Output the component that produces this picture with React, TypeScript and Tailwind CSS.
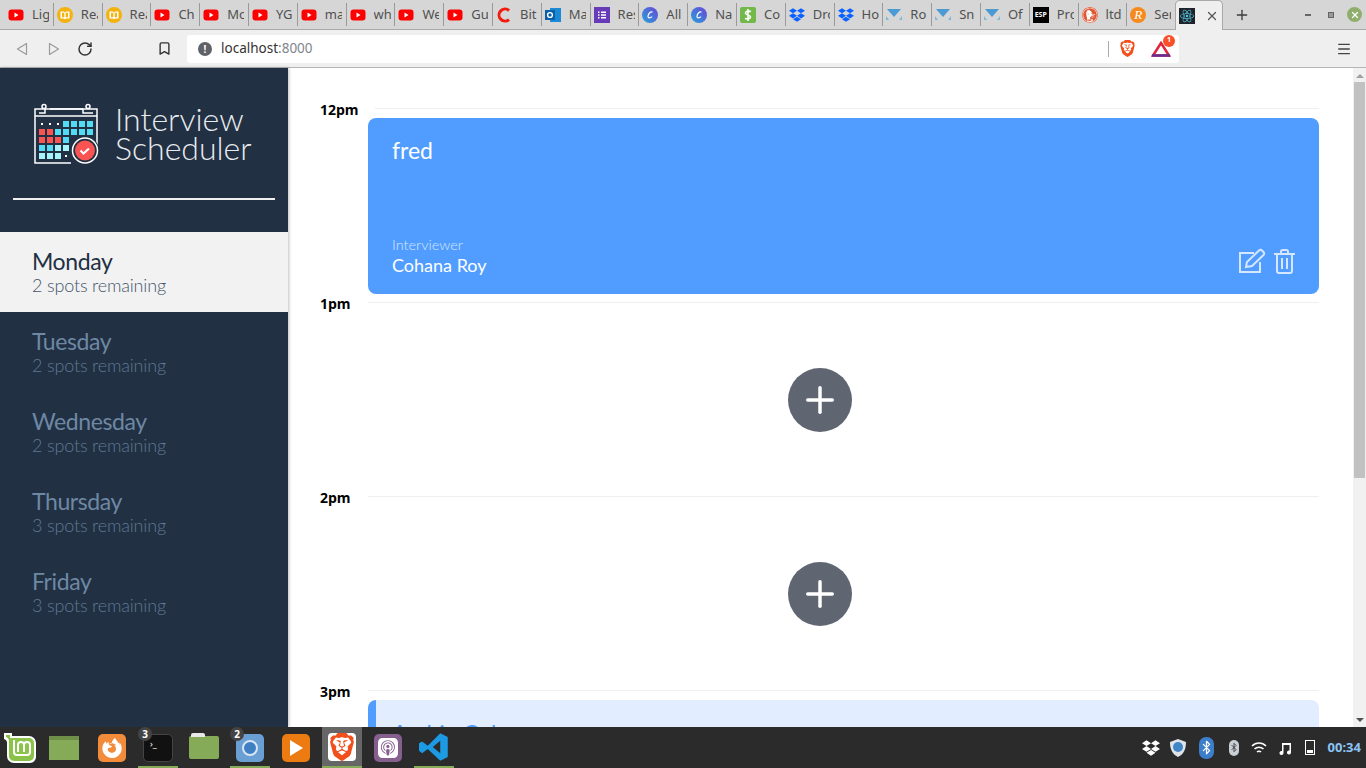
import { Bluetooth, Bookmark, Menu, Plus, RotateCw, X } from 'lucide-react';
import { SiApplepodcasts, SiBrave, SiDropbox, SiDuckduckgo, SiFirefoxbrowser, SiReact } from 'react-icons/si';
import type { ReactNode } from 'react';

type IconName =
  | 'yt' | 'book' | 'bit' | 'outlook' | 'forms' | 'canva' | 'coin' | 'dropbox'
  | 'tri' | 'esp' | 'duck' | 'r';

const tabs: { icon: IconName; label: string }[] = [
  { icon: 'yt', label: 'Lig' },
  { icon: 'book', label: 'Rea' },
  { icon: 'book', label: 'Rea' },
  { icon: 'yt', label: 'Cha' },
  { icon: 'yt', label: 'Mo' },
  { icon: 'yt', label: 'YG' },
  { icon: 'yt', label: 'ma' },
  { icon: 'yt', label: 'wh' },
  { icon: 'yt', label: 'We' },
  { icon: 'yt', label: 'Gu' },
  { icon: 'bit', label: 'Bit' },
  { icon: 'outlook', label: 'Ma' },
  { icon: 'forms', label: 'Res' },
  { icon: 'canva', label: 'All' },
  { icon: 'canva', label: 'Na' },
  { icon: 'coin', label: 'Co' },
  { icon: 'dropbox', label: 'Dro' },
  { icon: 'dropbox', label: 'Ho' },
  { icon: 'tri', label: 'Ro' },
  { icon: 'tri', label: 'Sn' },
  { icon: 'tri', label: 'Of' },
  { icon: 'esp', label: 'Pro' },
  { icon: 'duck', label: 'ltd' },
  { icon: 'r', label: 'Ser' },
];

const days = [
  { name: 'Monday', spots: '2 spots remaining', selected: true },
  { name: 'Tuesday', spots: '2 spots remaining' },
  { name: 'Wednesday', spots: '2 spots remaining' },
  { name: 'Thursday', spots: '3 spots remaining' },
  { name: 'Friday', spots: '3 spots remaining' },
];

function Favicon({ name }: { name: IconName }) {
  switch (name) {
    case 'yt':
      return (
        <svg width="16" height="16" viewBox="0 0 16 16">
          <rect x="0.5" y="2.5" width="15" height="11" rx="3" fill="#f00" />
          <path d="M6.5 5.5v5l4-2.5z" fill="#fff" />
        </svg>
      );
    case 'book':
      return (
        <svg width="16" height="16" viewBox="0 0 16 16">
          <circle cx="8" cy="8" r="8" fill="#f4b20f" />
          <path d="M3.5 4.500h3.200L8 5.500l1.300-1h3.200v7H9.300L8 12.300l-1.300-.8H3.500z" fill="#fff" />
          <path d="M5 5.800h2.300v4.400H5zM8.700 5.800H11v4.400H8.700z" fill="#f4b20f" />
        </svg>
      );
    case 'bit':
      return (
        <svg width="16" height="16" viewBox="0 0 16 16">
          <path d="M13 3.500a6 6 0 1 0 0 9" fill="none" stroke="#f01c10" strokeWidth="3" />
        </svg>
      );
    case 'outlook':
      return (
        <svg width="16" height="16" viewBox="0 0 16 16">
          <rect x="5" y="1" width="11" height="14" fill="#1a8ad6" />
          <rect x="0" y="3" width="10" height="10" fill="#0b5fa8" />
          <circle cx="5" cy="8" r="2.400" fill="none" stroke="#fff" strokeWidth="1.400" />
        </svg>
      );
    case 'forms':
      return (
        <svg width="16" height="16" viewBox="0 0 16 16">
          <rect width="16" height="16" fill="#673ab7" />
          <path d="M4 4.500h1.500V6H4zM7 4.500h5V6H7zM4 7.300h1.500v1.500H4zM7 7.300h5v1.500H7zM4 10h1.500v1.500H4zM7 10h5v1.500H7z" fill="#fff" />
        </svg>
      );
    case 'canva':
      return (
        <svg width="16" height="16" viewBox="0 0 16 16">
          <defs>
            <linearGradient id="canvaFill" x1="0" y1="1" x2="1" y2="0">
              <stop offset="0" stopColor="#27a3d8" />
              <stop offset="1" stopColor="#6a45d8" />
            </linearGradient>
          </defs>
          <circle cx="8" cy="8" r="8" fill="url(#canvaFill)" />
          <path d="M10.500 5.200C9 3.800 6 6.500 6 9.400c0 2 2.300 1.800 4 .2" fill="none" stroke="#fff" strokeWidth="1.200" />
        </svg>
      );
    case 'coin':
      return (
        <svg width="16" height="16" viewBox="0 0 16 16">
          <rect width="16" height="16" rx="2" fill="#72b84b" />
          <path d="M11 4.500C8 3.500 5.500 4.500 5.500 6.200s5 1.800 5 3.600S8 12.500 5 11.500M8 2v12" fill="none" stroke="#fff" strokeWidth="1.600" />
        </svg>
      );
    case 'dropbox':
      return <SiDropbox size={16} color="#0a63ff" />;
    case 'tri':
      return (
        <svg width="16" height="16" viewBox="0 0 16 16">
          <path d="M1 2h14L8 10z" fill="#4a9ad4" />
          <path d="M0 9l3 4H0zM16 9l-3 4h3z" fill="#7cb8e0" />
        </svg>
      );
    case 'esp':
      return (
        <div className="flex h-4 w-4 items-center justify-center bg-black text-[7px] leading-none font-bold text-white">ESP</div>
      );
    case 'duck':
      return (
        <div className="h-4 w-4 rounded-full bg-white">
          <SiDuckduckgo size={16} color="#de5833" />
        </div>
      );
    case 'r':
      return (
        <div className="flex h-4 w-4 items-center justify-center rounded-full bg-[#f58a1f] font-['Liberation_Serif',serif] text-[13px] leading-none italic text-white">R</div>
      );
  }
}

function Tab({ icon, label }: { icon: IconName; label: string }) {
  return (
    <div className="flex h-[23px] w-[48.8px] shrink-0 items-center border-r border-[#9a9a9a] pl-[3px]">
      <Favicon name={icon} />
      <span className="ml-[8px] w-[17px] overflow-hidden text-[13px] whitespace-nowrap text-[#505050]">{label}</span>
    </div>
  );
}

function BraveShield({ size }: { size: number }) {
  return (
    <div className="rounded-[4px] bg-white" style={{ width: size, height: size }}>
      <SiBrave size={size} color="#f1501d" />
    </div>
  );
}

function BrowserChrome() {
  return (
    <div className="shrink-0 font-['Noto_Sans',sans-serif]">
      <div className="flex h-[30px] items-end border-b border-[#a9a9a9] bg-[#d6d6d6] pl-[5px]">
        <div className="flex h-[29px] items-center">
          {tabs.map((t, i) => (
            <Tab key={i} icon={t.icon} label={t.label} />
          ))}
        </div>
        <div className="relative -mb-px ml-[-1px] flex h-[30px] w-[48px] shrink-0 items-center rounded-t-[5px] border border-b-0 border-[#a9a9a9] bg-[#efefef] pl-[3px]">
          <div className="flex h-4 w-4 items-center justify-center bg-[#20232a]">
            <SiReact size={14} color="#4fc3dd" />
          </div>
          <X className="ml-[10px] text-[#555]" size={14} strokeWidth={2.2} />
        </div>
        <div className="flex h-[29px] items-center pl-[11px]">
          <Plus className="text-[#3c3c3c]" size={16} strokeWidth={2} />
        </div>
        <div className="flex h-[29px] flex-1 items-center justify-end pr-[4px]">
          <div className="mr-[17px] h-[2px] w-[6px] bg-[#666]" />
          <div className="mr-[13px] h-[6px] w-[6px] border border-[#666] bg-[#999]" />
          <div className="flex h-[15px] w-[15px] items-center justify-center rounded-full bg-[#8fae6c]">
            <X className="text-white" size={10} strokeWidth={3} />
          </div>
        </div>
      </div>
      <div className="flex h-[38px] items-center border-b border-[#b5b5b5] bg-[#efefef]">
        <svg className="ml-[16px]" width="12" height="14" viewBox="0 0 12 14" fill="none" stroke="#9a9a9a" strokeWidth="1.200">
          <path d="M10.500 1.500v11L1.500 7z" strokeLinejoin="round" />
        </svg>
        <svg className="ml-[20px]" width="12" height="14" viewBox="0 0 12 14" fill="none" stroke="#9a9a9a" strokeWidth="1.200">
          <path d="M1.500 1.500v11l9-5.500z" strokeLinejoin="round" />
        </svg>
        <RotateCw className="ml-[17px] text-[#333]" size={16} strokeWidth={2.2} />
        <Bookmark className="ml-[64px] text-[#333]" size={15} strokeWidth={2.2} />
        <div className="ml-[15px] flex h-[28px] w-[992px] items-center rounded-[3px] bg-white">
          <div className="ml-[11px] flex h-[14px] w-[14px] items-center justify-center rounded-full bg-[#5f6368] text-[10px] leading-none font-bold text-white">!</div>
          <span className="ml-[9px] text-[13.5px] text-[#333]">
            localhost<span className="text-[#80868b]">:8000</span>
          </span>
          <div className="ml-auto h-[16px] w-px bg-[#aaa]" />
          <div className="ml-[10px]">
            <BraveShield size={17} />
          </div>
          <div className="relative mr-[8px] ml-[15px] h-[16px] w-[20px]">
            <svg width="20" height="16" viewBox="0 0 20 16" fill="none">
              <path d="M10 2 18 14.500H2z" stroke="#e0243c" strokeWidth="2.500" />
              <path d="M1 14.500h18" stroke="#662d91" strokeWidth="2.500" />
            </svg>
            <div className="absolute -top-[6px] -right-[4px] flex h-[12px] w-[12px] items-center justify-center rounded-full bg-[#f9502a] text-[7px] font-bold text-white">1</div>
          </div>
        </div>
        <Menu className="ml-[157px] text-[#444]" size={16} strokeWidth={2} />
      </div>
    </div>
  );
}

function Logo() {
  const cell = (x: number, y: number, fill: string) => <rect key={`${x}-${y}`} x={x} y={y} width="6" height="6" fill={fill} />;
  const cyan = '#53dbf3';
  const red = '#f95452';
  const light = '#a6f4fb';
  return (
    <svg width="66" height="62" viewBox="33 103 66 62" className="shrink-0">
      <g fill="none" stroke="#fff" strokeWidth="1.500">
        <path d="M71 163H35V109h62v36" />
        <path d="M35 116h62" />
        <path d="M39 113h6V109M50 109h33M83 109v4h10" />
        <circle cx="44" cy="106.500" r="2" />
        <circle cx="88" cy="106.500" r="2" />
      </g>
      <g fill="#fff">
        <rect x="41" y="123" width="2" height="2" />
        <rect x="49" y="123" width="2" height="2" />
        <rect x="57" y="123" width="2" height="2" />
        <rect x="65" y="155" width="2" height="2" />
      </g>
      {[63, 71, 79, 87].map((x) => cell(x, 121, cyan))}
      {[39, 47].map((x) => cell(x, 129, red))}
      {[55, 63, 71, 79, 87].map((x) => cell(x, 129, cyan))}
      {[39, 47, 55].map((x) => cell(x, 137, red))}
      {cell(63, 137, cyan)}
      {[39, 47].map((x) => cell(x, 145, cyan))}
      {[55, 63].map((x) => cell(x, 145, light))}
      {[39, 47, 55].map((x) => cell(x, 153, light))}
      <circle cx="85" cy="150.500" r="14" fill="#213043" />
      <circle cx="85" cy="150.500" r="12.500" fill="none" stroke="#fff" strokeWidth="1.500" />
      <circle cx="85" cy="150.500" r="10" fill={red} />
      <path d="M80.500 150.500l3 3 5.500-5" fill="none" stroke="#fff" strokeWidth="2" />
    </svg>
  );
}

function Sidebar() {
  return (
    <aside className="flex w-[288px] shrink-0 flex-col bg-[#213043] font-['Lato',sans-serif] shadow-[1px_0_3px_rgba(0,0,0,0.25)]">
      <div className="mx-[13px] flex h-[132px] items-start border-b-2 border-[#f0f0f0] pt-[35px] pl-[20px]">
        <Logo />
        <div className="mt-[1px] ml-[16px] text-[32px] leading-[29px] font-light text-[#e8ebee]">
          Interview
          <br />
          Scheduler
        </div>
      </div>
      <ul className="mt-[32px]">
        {days.map((d) => (
          <li key={d.name} className={`flex h-[80px] flex-col justify-center pb-[2px] pl-[32px] ${d.selected ? 'bg-[#f2f2f2] text-[#213043]' : 'text-[#6e88a3]'}`}>
            <div className="text-[23px] leading-[28px] tracking-[-0.4px]">{d.name}</div>
            <div className={`text-[18px] leading-[20px] font-light tracking-[-0.18px] ${d.selected ? 'text-[#45556a]' : 'text-[#5f7891]'}`}>{d.spots}</div>
          </li>
        ))}
      </ul>
    </aside>
  );
}

function Slot({ time, wide, children }: { time: string; wide?: boolean; children?: ReactNode }) {
  return (
    <div className="h-[194px] shrink-0">
      <div className="flex h-[1px] items-center">
        <span className="w-[48px] shrink-0 pt-[1px] font-['Open_Sans',sans-serif] text-[14px] font-bold text-black">{time}</span>
        <div className={`h-px flex-1 bg-[#efefef] ${wide ? 'ml-[7px]' : ''}`} />
      </div>
      {children}
    </div>
  );
}

function AddButton() {
  return (
    <div className="flex h-[193px] items-center justify-center pt-[1px]">
      <div className="flex h-[64px] w-[64px] items-center justify-center rounded-full bg-[#5f6672]">
        <Plus className="text-white" size={42} strokeWidth={2} />
      </div>
    </div>
  );
}

function Booked() {
  return (
    <div className="mt-[9px] ml-[48px] flex h-[176px] flex-col rounded-[8px] bg-[#519dff] px-[24px] pt-[16px] text-white">
      <div className="text-[23px] leading-[32px]">fred</div>
      <div className="mt-auto flex items-end justify-between pb-[18px]">
        <div>
          <div className="text-[14.5px] leading-[18px] font-light text-[#d5e6ff]">Interviewer</div>
          <div className="text-[18px] leading-[22px]">Cohana Roy</div>
        </div>
        <div className="flex items-center gap-[8px] pb-[2px] text-[#d5e6ff]">
          <svg width="28" height="26" viewBox="0 0 28 26" fill="none" stroke="currentColor" strokeWidth="2">
            <path d="M16 5H2v19h20v-10" />
            <path d="M8 19l1-5L21 2.500a2 2 0 0 1 3 0l1.500 1.500a2 2 0 0 1 0 3L14 18z" />
          </svg>
          <svg width="21" height="25" viewBox="0 0 21 25" fill="none" stroke="currentColor" strokeWidth="2">
            <path d="M0 5h21M7 5V2.500A1.500 1.500 0 0 1 8.500 1h4A1.500 1.500 0 0 1 14 2.500V5" />
            <path d="M3 5v17a2 2 0 0 0 2 2h11a2 2 0 0 0 2-2V5M8 9v11M13 9v11" />
          </svg>
        </div>
      </div>
    </div>
  );
}

function Scrollbar() {
  return (
    <div className="flex w-[13px] shrink-0 flex-col items-center bg-[#f1f1f1]">
      <div className="mt-[6px] h-0 w-0 border-x-[4px] border-b-[4px] border-x-transparent border-b-[#a0a0a0]" />
      <div className="mt-[4px] h-[396px] w-[11px] bg-[#c1c1c1]" />
      <div className="mt-auto mb-[5px] h-0 w-0 border-x-[4px] border-t-[4px] border-x-transparent border-t-[#505050]" />
    </div>
  );
}

function Taskbar() {
  return (
    <div className="flex h-[41px] shrink-0 items-center bg-[#2b2b2b] font-['Noto_Sans',sans-serif]">
      <svg className="ml-[4px]" width="32" height="31" viewBox="0 0 32 31">
        <path d="M0 1h8v3h17a7 7 0 0 1 7 7v14a6 6 0 0 1-6 6H10a7 7 0 0 1-7-7V10a4 4 0 0 0-3-3z" fill="#fff" />
        <path d="M2 3h4v3h19a5 5 0 0 1 5 5v13a5 5 0 0 1-5 5H10a5 5 0 0 1-5-5V10a5 5 0 0 0-3-5z" fill="#8bc34a" />
        <path d="M10 8v12a3 3 0 0 0 3 3h10a3 3 0 0 0 3-3v-7a3 3 0 0 0-6 0v7M20 13a3 3 0 0 0-6 0v7" fill="none" stroke="#fff" strokeWidth="2" />
      </svg>
      <div className="ml-[13px] h-[24px] w-[30px] border-t-[4px] border-[#6f8f49] bg-[#86ab58]" />
      <div className="ml-[19px] flex h-[28px] w-[28px] items-center justify-center rounded-[5px] bg-[#f28b3a]">
        <SiFirefoxbrowser size={20} color="#fff" />
      </div>
      <div className="relative ml-[12px] flex h-[41px] w-[40px] items-center justify-center border-b-[2px] border-[#86ab58] pt-[2px]">
        <div className="h-[28px] w-[30px] rounded-[5px] border border-[#444] bg-[#111] pt-[4px] pl-[6px] text-[9px] leading-none text-white">›_</div>
        <div className="absolute top-0 left-0 flex h-[14px] w-[14px] items-center justify-center rounded-full bg-[#444] text-[10px] font-bold text-white">3</div>
      </div>
      <div className="relative ml-[11px] h-[23px] w-[30px] rounded-[2px] bg-[#86ab58]">
        <div className="absolute -top-[3px] left-[2px] h-[4px] w-[14px] rounded-t-[2px] bg-[#e8e8e8]" />
      </div>
      <div className="relative ml-[11px] flex h-[41px] w-[40px] items-center justify-center border-b-[2px] border-[#86ab58] pt-[2px]">
        <div className="flex h-[28px] w-[28px] items-center justify-center rounded-[5px] bg-[#6a9fd4]">
          <div className="h-[16px] w-[16px] rounded-full border-[2px] border-[#d8e6f4] bg-[#3f7fc4]" />
        </div>
        <div className="absolute top-0 left-0 flex h-[14px] w-[14px] items-center justify-center rounded-full bg-[#444] text-[10px] font-bold text-white">2</div>
      </div>
      <div className="ml-[12px] flex h-[28px] w-[28px] items-center justify-center rounded-[5px] bg-[#ec7c12]">
        <div className="h-0 w-0 border-y-[8px] border-l-[13px] border-y-transparent border-l-white" />
      </div>
      <div className="ml-[12px] flex h-[41px] w-[40px] items-center justify-center border-b-[2px] border-[#86ab58] bg-[#666]">
        <BraveShield size={28} />
      </div>
      <div className="ml-[12px] flex h-[28px] w-[28px] items-center justify-center rounded-[5px] bg-[#85608f]">
        <SiApplepodcasts size={20} color="#fff" />
      </div>
      <div className="ml-[12px] flex h-[41px] w-[40px] items-center justify-center border-b-[2px] border-[#86ab58]">
        <svg width="30" height="30" viewBox="0 0 24 24">
          <path d="M17 1l6 3v16l-6 3-10-9.500-4.500 3.500L0 15V9l2.500-1.500L7 11zM17 7l-6 5 6 5z" fill="#1c9ae4" fillRule="evenodd" />
        </svg>
      </div>
      <div className="ml-auto flex items-center pr-[5px]">
        <SiDropbox size={18} color="#fff" />
        <svg className="ml-[9px]" width="18" height="20" viewBox="0 0 18 20">
          <path d="M9 1l8 3c0 7-2 12-8 15C3 16 1 11 1 4z" fill="#dfe3e8" />
          <circle cx="9" cy="9" r="5" fill="#3f86c9" />
        </svg>
        <div className="ml-[12px] flex h-[22px] w-[15px] items-center justify-center rounded-[7px] bg-[#3d7ecb]">
          <Bluetooth className="text-white" size={15} strokeWidth={2} />
        </div>
        <div className="ml-[15px] flex h-[16px] w-[10px] items-center justify-center rounded-[5px] bg-[#c9ced4]">
          <Bluetooth className="text-[#333]" size={11} strokeWidth={2} />
        </div>
        <svg className="ml-[12px]" width="16" height="14" viewBox="0 0 16 14" fill="none" stroke="#fff" strokeWidth="1.500">
          <path d="M1 5c4-4 10-4 14 0M3.500 8c2.500-2.500 6.500-2.500 9 0M6 11c1-1 3-1 4 0" />
        </svg>
        <svg className="ml-[11px]" width="14" height="14" viewBox="0 0 14 14" fill="#fff">
          <path d="M4 2h9v9.500a2 2 0 1 1-1.500-2V4H5.500v8a2 2 0 1 1-1.500-2z" />
        </svg>
        <div className="ml-[13px] flex h-[15px] w-[10px] items-end border border-white p-px">
          <div className="h-[3px] w-full bg-white" />
        </div>
        <span className="ml-[13px] text-[13px] font-bold text-[#8cc4f5]">00:34</span>
      </div>
    </div>
  );
}

export default function App() {
  return (
    <div className="flex h-[768px] w-[1366px] flex-col overflow-hidden bg-white">
      <BrowserChrome />
      <div className="flex min-h-0 flex-1">
        <Sidebar />
        <main className="min-w-0 flex-1 overflow-hidden pt-[40px] pr-[34px] pl-[32px] font-['Lato',sans-serif]">
          <Slot time="12pm" wide>
            <Booked />
          </Slot>
          <Slot time="1pm">
            <AddButton />
          </Slot>
          <Slot time="2pm">
            <AddButton />
          </Slot>
          <Slot time="3pm">
            <div className="mt-[9px] ml-[48px] h-[100px] rounded-[8px] border-l-[8px] border-[#519dff] bg-[#e2eeff] pt-[17px] pl-[16px] text-[23px] leading-[32px] text-[#519dff]">
              Archie Cohen
            </div>
          </Slot>
        </main>
        <Scrollbar />
      </div>
      <Taskbar />
    </div>
  );
}
